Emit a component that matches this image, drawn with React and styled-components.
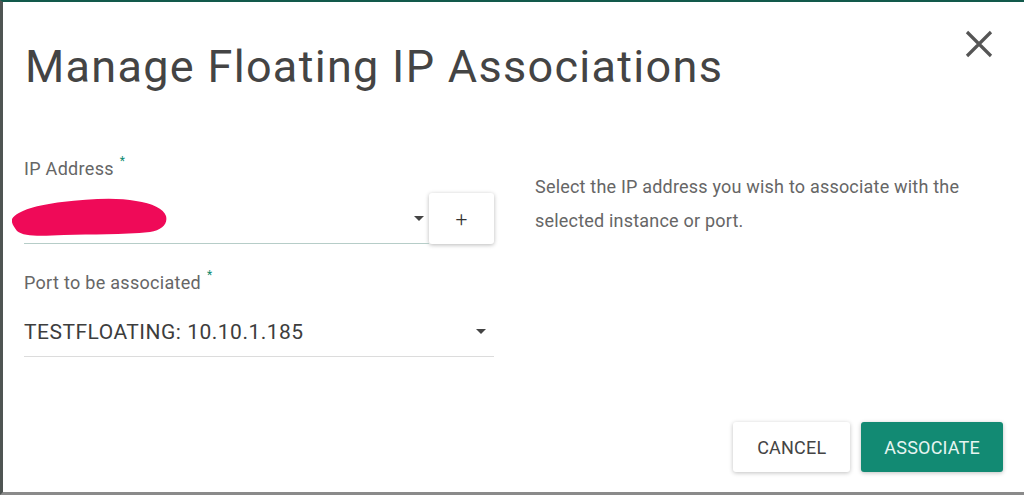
import React from 'react';
import styled, { createGlobalStyle } from 'styled-components';

const GlobalStyle = createGlobalStyle`
  html, body {
    margin: 0;
    padding: 0;
    background: #5e5e5e;
    font-family: Roboto, "Liberation Sans", sans-serif;
  }
`

const Screen = styled.div`
  box-sizing: border-box;
  height: 495px;
  width: 1024px;
  border-top: 2px solid #12594b;
  border-left: 3px solid #4f5553;
  border-bottom: 3px solid #8a8a8a;
  background: #fff;
  overflow: hidden;
`

const Dialog = styled.div`
  box-sizing: border-box;
  height: 100%;
  display: flex;
  flex-direction: column;
  padding: 28px 21px 20px 21px;
  background: #fff;
`

const Header = styled.div`
  display: flex;
  justify-content: space-between;
  align-items: flex-start;
`

const Title = styled.h1`
  margin: 14px 0 0 1px;
  font-size: 45px;
  line-height: 1;
  font-weight: 400;
  letter-spacing: 1.3px;
  color: #444;
`

const CloseButton = styled.button`
  width: 28px;
  height: 28px;
  margin-right: 10px;
  padding: 0;
  border: none;
  background: none;
  cursor: pointer;
`

const Body = styled.div`
  display: flex;
  gap: 41px;
  margin-top: 70px;
`

const LeftColumn = styled.div`
  width: 470px;
  display: flex;
  flex-direction: column;
`

const Label = styled.label`
  display: block;
  font-size: 18px;
  line-height: 20px;
  letter-spacing: 0.3px;
  color: #666;
  margin: ${p => p.$top || 0}px 0 ${p => p.$bottom || 0}px;
`

const Required = styled.span`
  color: #0e8a6e;
  font-size: 12px;
  line-height: 0;
  vertical-align: 10px;
  margin-left: 6px;
`

const SelectRow = styled.div`
  display: flex;
  align-items: stretch;
  height: 51px;
`

const Select = styled.div`
  position: relative;
  flex: ${p => p.$grow ? '1' : 'none'};
  display: flex;
  align-items: center;
  justify-content: space-between;
  border-bottom: 1px solid ${p => p.$active ? '#b6cdc8' : '#dcdcdc'};
  height: ${p => p.$height || 'auto'};
  padding-top: ${p => p.$padTop || 0}px;
  box-sizing: border-box;
`

const Value = styled.span`
  font-size: 21px;
  color: #3d3d3d;
  letter-spacing: 0.5px;
`

const Caret = styled.span`
  width: 0;
  height: 0;
  border-left: 5px solid transparent;
  border-right: 5px solid transparent;
  border-top: 5px solid #444;
  margin-right: ${p => p.$right || 5}px;
`

const Scribble = styled.svg`
  position: absolute;
  left: -12px;
  top: 4px;
`

const AddButton = styled.button`
  width: 65px;
  border: none;
  border-radius: 3px;
  background: #fff;
  box-shadow: 0 1px 4px rgba(0, 0, 0, 0.28);
  font-family: inherit;
  font-size: 21px;
  font-weight: 300;
  color: #333;
  cursor: pointer;
`

const HelpText = styled.p`
  margin: 11px 0 0;
  width: 440px;
  font-size: 18px;
  line-height: 34px;
  letter-spacing: 0.2px;
  color: #666;
`

const Footer = styled.div`
  margin-top: auto;
  display: flex;
  justify-content: flex-end;
  gap: 11px;
`

const Button = styled.button`
  height: 50px;
  padding: 0 ${p => p.$pad || 23}px;
  border: none;
  border-radius: 3px;
  font-family: inherit;
  font-size: 18px;
  letter-spacing: 0.2px;
  text-transform: uppercase;
  background: ${p => p.$primary ? '#128a73' : '#fff'};
  color: ${p => p.$primary ? '#e6f5f1' : '#444'};
  box-shadow: 0 1px 4px rgba(0, 0, 0, 0.25);
  cursor: pointer;
`

export default function App() {
  return (
    <>
      <GlobalStyle />
      <Screen>
        <Dialog>
          <Header>
            <Title>Manage Floating IP Associations</Title>
            <CloseButton aria-label="close">
              <svg width="28" height="28" viewBox="0 0 28 28">
                <path d="M2 2 L26 26 M26 2 L2 26" stroke="#555" strokeWidth="3.2" />
              </svg>
            </CloseButton>
          </Header>
          <Body>
            <LeftColumn>
              <Label $bottom={14}>IP Address<Required>*</Required></Label>
              <SelectRow>
                <Select $active $grow>
                  <Scribble width="156" height="42" viewBox="0 0 156 42">
                    <path
                      d="M0 22 C6 13 26 8 50 5 C76 2 104 0 124 4 C140 6 152 12 154 19 C156 27 150 33 138 35 C110 38 80 37 52 38 C30 39 12 40 5 34 C2 30 -1 26 0 22 Z"
                      fill="#ef0a58"
                    />
                  </Scribble>
                  <span />
                  <Caret $right={5} />
                </Select>
                <AddButton>+</AddButton>
              </SelectRow>
              <Label $top={29}>Port to be associated<Required>*</Required></Label>
              <Select $height="64px" $padTop={14}>
                <Value>TESTFLOATING: 10.10.1.185</Value>
                <Caret $right={8} />
              </Select>
            </LeftColumn>
            <HelpText>
              Select the IP address you wish to associate with the selected instance or port.
            </HelpText>
          </Body>
          <Footer>
            <Button $pad={24}>Cancel</Button>
            <Button $primary $pad={23}>Associate</Button>
          </Footer>
        </Dialog>
      </Screen>
    </>
  )
}
